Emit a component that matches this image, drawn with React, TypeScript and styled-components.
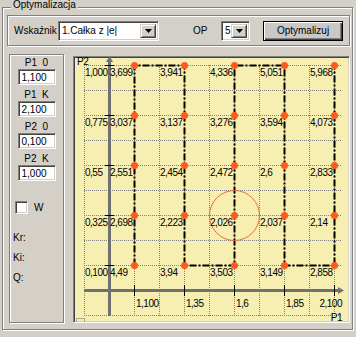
import React from "react";
import styled, { createGlobalStyle } from "styled-components";

const GlobalStyle = createGlobalStyle`
  html, body {
    margin: 0;
    padding: 0;
  }
  body {
    background: #d4d0c8;
    font-family: "Liberation Sans", Arial, sans-serif;
    font-size: 10px;
    color: #000;
  }
`;

const Window = styled.div`
  width: 356px;
  height: 337px;
  box-sizing: border-box;
  overflow: hidden;
  padding: 7px 0 0 2px;
`;

// etched frame, like a Delphi TGroupBox / TBevel
const GroupBox = styled.div`
  position: relative;
  width: 351px;
  height: 323px;
  box-sizing: border-box;
  border: 1px solid #808080;
  box-shadow: inset 1px 1px 0 #fff, 1px 1px 0 #fff;
  padding: 7px 2px 0 4px;
`;

const Legend = styled.span`
  position: absolute;
  top: -9px;
  left: 8px;
  padding: 0 2px;
  line-height: 12px;
  background: #d4d0c8;
`;

const TopRow = styled.div`
  display: flex;
  align-items: center;
  height: 31px;
  box-sizing: border-box;
  border: 1px solid #808080;
  box-shadow: inset 1px 1px 0 #fff, 1px 1px 0 #fff;
  padding-left: 6px;
`;

const RowLabel = styled.span<{ $width: number; $left?: number }>`
  width: ${(p) => p.$width}px;
  margin-left: ${(p) => p.$left ?? 0}px;
  white-space: nowrap;
`;

const Combo = styled.div<{ $width: number }>`
  display: flex;
  width: ${(p) => p.$width}px;
  height: 20px;
  box-sizing: border-box;
  border: 1px solid;
  border-color: #808080 #fff #fff #808080;
  box-shadow: inset 1px 1px 0 #404040, inset -1px -1px 0 #d4d0c8;
  background: #fff;
  padding: 2px;
`;

const ComboText = styled.span`
  flex: 1;
  line-height: 14px;
  padding-left: 1px;
  white-space: nowrap;
`;

const ComboButton = styled.span`
  width: 16px;
  box-sizing: border-box;
  display: flex;
  align-items: center;
  justify-content: center;
  background: #d4d0c8;
  border: 1px solid;
  border-color: #d4d0c8 #404040 #404040 #d4d0c8;
  box-shadow: inset 1px 1px 0 #fff, inset -1px -1px 0 #808080;
`;

const ActionButton = styled.button`
  margin-left: 13px;
  width: 80px;
  height: 20px;
  padding: 0;
  border: 1px solid #000;
  background: #c8c8c8;
  box-shadow: inset 1px 1px 0 #fff, inset -1px -1px 0 #404040,
    inset -2px -2px 0 #808080;
  font: inherit;
  color: #000;
`;

const Body = styled.div`
  display: flex;
  align-items: flex-start;
  margin-top: 8px;
  padding-left: 2px;
`;

const SidePanel = styled.div`
  display: flex;
  flex-direction: column;
  width: 55px;
  height: 269px;
  box-sizing: border-box;
  border: 1px solid #808080;
  box-shadow: inset 1px 1px 0 #fff, 1px 1px 0 #fff;
  padding: 2px 0 0 3px;
`;

const Param = styled.div`
  display: flex;
  flex-direction: column;
  align-items: center;
  padding-right: 3px;
  margin-bottom: 4px;
`;

const ParamLabel = styled.span`
  line-height: 12px;
  white-space: pre;
`;

const Field = styled.div`
  width: 38px;
  height: 16px;
  box-sizing: border-box;
  border: 1px solid;
  border-color: #808080 #fff #fff #808080;
  box-shadow: inset 1px 1px 0 #404040, inset -1px -1px 0 #d4d0c8;
  background: #fff;
  padding: 1px 0 0 3px;
  line-height: 13px;
`;

const CheckRow = styled.label`
  display: flex;
  align-items: center;
  gap: 6px;
  margin: 16px 0 0 2px;
`;

const CheckBox = styled.span`
  width: 13px;
  height: 13px;
  box-sizing: border-box;
  border: 1px solid;
  border-color: #808080 #fff #fff #808080;
  box-shadow: inset 1px 1px 0 #404040, inset -1px -1px 0 #d4d0c8;
  background: #fff;
`;

const Stat = styled.span<{ $top?: number }>`
  line-height: 12px;
  margin-top: ${(p) => p.$top ?? 8}px;
`;

const ChartPanel = styled.div`
  margin: 2px 0 0 9px;
  width: 277px;
  height: 267px;
  box-sizing: border-box;
  border: 1px solid;
  border-color: #808080 #fff #fff #808080;
  box-shadow: inset 1px 1px 0 #404040, inset -1px -1px 0 #d4d0c8;
  background: #f7efb1;

  svg {
    display: block;
  }
  text {
    letter-spacing: -0.5px;
  }
`;

const cols = [134, 184, 234, 284, 334];
const rows = [65, 115, 165, 215, 265];
const p2Labels = ["1,000", "0,775", "0,55", "0,325", "0,100"];
const p1Labels = ["1,100", "1,35", "1,6", "1,85", "2,100"];
const values = [
  ["3,699", "3,941", "4,336", "5,051", "5,968"],
  ["3,037", "3,137", "3,276", "3,594", "4,073"],
  ["2,551", "2,454", "2,472", "2,6", "2,833"],
  ["2,698", "2,223", "2,026", "2,037", "2,14"],
  ["4,49", "3,94", "3,503", "3,149", "2,858"],
];
const gridX = Array.from({ length: 11 }, (_, i) => 84 + i * 25);
const gridY = Array.from({ length: 11 }, (_, i) => 65 + i * 25);

function Arrow() {
  return (
    <svg width="7" height="4" viewBox="0 0 7 4">
      <polygon points="0,0 7,0 3.5,4" fill="#000" />
    </svg>
  );
}

function Chart() {
  return (
    <ChartPanel>
      <svg
        width="275"
        height="265"
        viewBox="74 57 275 265"
        fontFamily='"Liberation Sans", Arial, sans-serif'
        fontSize="10"
      >
        <g stroke="#808080" strokeWidth="1" strokeDasharray="1 1">
          {gridX.map((x) => (
            <line key={"v" + x} x1={x + 0.5} y1={65} x2={x + 0.5} y2={316} />
          ))}
          {gridY.map((y) => (
            <line key={"h" + y} x1={84} y1={y + 0.5} x2={342} y2={y + 0.5} />
          ))}
        </g>

        <g fill="#707070" stroke="none">
          <rect x={108} y={60} width={3} height={256} />
          <polygon points="106,62 109.5,56 113,62" />
          <rect x={84} y={289} width={255} height={3} />
          <polygon points="338,287 344,290.5 338,294" />
        </g>

        <g stroke="#000" strokeWidth="1">
          {rows.map((y) => (
            <line key={"ty" + y} x1={105} y1={y + 0.5} x2={114} y2={y + 0.5} />
          ))}
          {cols.map((x) => (
            <line key={"tx" + x} x1={x + 0.5} y1={285} x2={x + 0.5} y2={296} />
          ))}
        </g>

        <path
          d="M134.5 265.5 V65.5 H184.5 V265.5 H234.5 V65.5 H284.5 V265.5 H334.5 V65.5"
          fill="none"
          stroke="#000"
          strokeWidth="2"
          strokeDasharray="7 2 2 2"
        />

        <circle cx={234.5} cy={215.5} r={25} fill="none" stroke="#e0703a" />

        <text x={77} y={65}>P2</text>
        <text x={342} y={321} textAnchor="end">P1</text>

        {rows.map((y, r) => (
          <g key={"r" + y}>
            <text x={85} y={y + 11}>{p2Labels[r]}</text>
            {cols.map((x, c) => (
              <text key={"val" + x} x={x - 24} y={y + 11}>
                {values[r][c]}
              </text>
            ))}
          </g>
        ))}

        {cols.map((x, c) =>
          c === cols.length - 1 ? (
            <text key={"p1" + x} x={342} y={307} textAnchor="end">
              {p1Labels[c]}
            </text>
          ) : (
            <text key={"p1" + x} x={x + 2} y={307}>
              {p1Labels[c]}
            </text>
          )
        )}

        {rows.map((y) =>
          cols.map((x) => (
            <circle key={"d" + x + y} cx={x + 0.5} cy={y + 0.5} r={3.5} fill="#ff5a1e" />
          ))
        )}

        <rect
          x={76.5}
          y={318.5}
          width={8}
          height={6}
          fill="none"
          stroke="#606060"
          strokeDasharray="1 1"
        />
      </svg>
    </ChartPanel>
  );
}

export default function App() {
  return (
    <Window>
      <GlobalStyle />
      <GroupBox>
        <Legend>Optymalizacja</Legend>
        <TopRow>
          <RowLabel $width={44}>Wskaźnik</RowLabel>
          <Combo $width={101}>
            <ComboText>1.Całka z |e|</ComboText>
            <ComboButton>
              <Arrow />
            </ComboButton>
          </Combo>
          <RowLabel $width={28} $left={34}>
            OP
          </RowLabel>
          <Combo $width={29}>
            <ComboText>5</ComboText>
            <ComboButton>
              <Arrow />
            </ComboButton>
          </Combo>
          <ActionButton>Optymalizuj</ActionButton>
        </TopRow>

        <Body>
          <SidePanel>
            <Param>
              <ParamLabel>P1  0</ParamLabel>
              <Field>1,100</Field>
            </Param>
            <Param>
              <ParamLabel>P1  K</ParamLabel>
              <Field>2,100</Field>
            </Param>
            <Param>
              <ParamLabel>P2  0</ParamLabel>
              <Field>0,100</Field>
            </Param>
            <Param>
              <ParamLabel>P2  K</ParamLabel>
              <Field>1,000</Field>
            </Param>
            <CheckRow>
              <CheckBox />
              W
            </CheckRow>
            <Stat $top={18}>Kr:</Stat>
            <Stat>Ki:</Stat>
            <Stat>Q:</Stat>
          </SidePanel>
          <Chart />
        </Body>
      </GroupBox>
    </Window>
  );
}
